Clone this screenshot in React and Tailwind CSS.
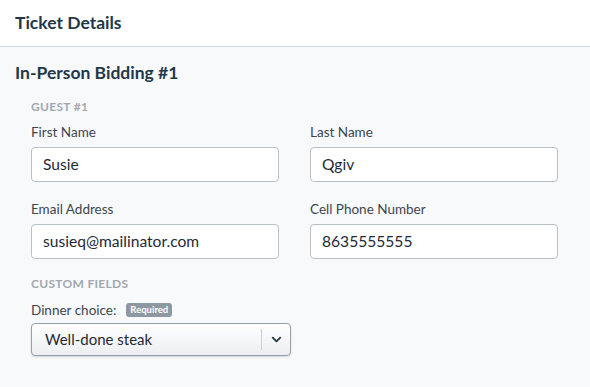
import { ChevronDown } from 'lucide-react';

const FONT = { fontFamily: 'Lato, "Open Sans", sans-serif' };

function Field({ label, value }) {
  return (
    <div className="flex flex-col">
      <label className="text-[13.5px] text-[#3b4651] leading-4 mb-[7px]">{label}</label>
      <div className="h-[35px] bg-white border border-[#b9c0c6] rounded-[4px] flex items-center px-[11px] text-[15.6px] text-[#1f2a35]">
        {value}
      </div>
    </div>
  );
}

export default function App() {
  return (
    <div className="w-[590px] h-[387px] bg-[#f8f9fa] text-[#27394a]" style={FONT}>
      {/* Header */}
      <div className="h-[47px] bg-white border-b border-[#d5dadf] flex items-center px-[15px] pt-[1px]">
        <h1 className="text-[17.5px] font-bold text-[#22384a]">Ticket Details</h1>
      </div>

      <div className="px-[15px] pt-[16px]">
        <h2 className="text-[17.5px] font-bold text-[#22384a] leading-5">In-Person Bidding #1</h2>

        <div className="pl-[16px] pr-[16px] pt-[16px]">
          <p className="text-[12px] font-bold uppercase tracking-wide text-[#a1a8af] leading-4">Guest #1</p>

          <div className="grid grid-cols-[248px_248px] gap-x-[31px] gap-y-[19px] mt-[9px]">
            <Field label="First Name" value="Susie" />
            <Field label="Last Name" value="Qgiv" />
            <Field label="Email Address" value="susieq@mailinator.com" />
            <Field label="Cell Phone Number" value="8635555555" />
          </div>

          <p className="text-[12px] font-bold uppercase tracking-wide text-[#a1a8af] leading-4 mt-[17px]">Custom Fields</p>

          <div className="flex items-center gap-[10px] mt-[10px]">
            <span className="text-[13.5px] text-[#3b4651] leading-4">Dinner choice:</span>
            <span className="bg-[#8e98a2] text-white text-[9.5px] font-bold rounded-[3px] px-[4px] leading-[14px]">Required</span>
          </div>

          <div className="w-[260px] h-[33px] mt-[5px] rounded-[4px] border border-[#97a0a8] bg-gradient-to-b from-white to-[#eceef1] shadow-[0_1px_2px_rgba(0,0,0,0.15)] flex items-center">
            <span className="flex-1 px-[13px] text-[15px] text-[#1f2a35]">Well-done steak</span>
            <div className="w-px h-[21px] bg-[#c9ced3]" />
            <div className="w-[28px] flex items-center justify-center">
              <ChevronDown className="w-[15px] h-[15px] text-[#2a3744]" strokeWidth={3} />
            </div>
          </div>
        </div>
      </div>
    </div>
  );
}
